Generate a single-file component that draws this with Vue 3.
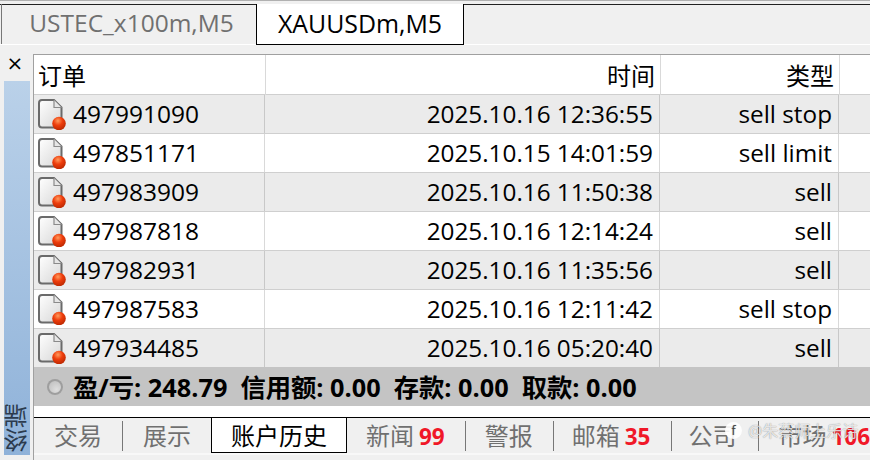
<script setup>
const orders = [
  { id: "497991090", time: "2025.10.16 12:36:55", type: "sell stop" },
  { id: "497851171", time: "2025.10.15 14:01:59", type: "sell limit" },
  { id: "497983909", time: "2025.10.16 11:50:38", type: "sell" },
  { id: "497987818", time: "2025.10.16 12:14:24", type: "sell" },
  { id: "497982931", time: "2025.10.16 11:35:56", type: "sell" },
  { id: "497987583", time: "2025.10.16 12:11:42", type: "sell stop" },
  { id: "497934485", time: "2025.10.16 05:20:40", type: "sell" },
];

const tabs = [
  { label: "交易" },
  { label: "展示" },
  { label: "账户历史", active: true },
  { label: "新闻", count: 99 },
  { label: "警报" },
  { label: "邮箱", count: 35 },
  { label: "公司" },
  { label: "市场", count: 106 },
];
</script>

<template>
  <div class="app">
    <div class="chart-tabs">
      <div class="chart-tab">USTEC_x100m,M5</div>
      <div class="chart-tab chart-tab-active">XAUUSDm,M5</div>
    </div>

    <div class="terminal">
      <div class="side">
        <span class="close">×</span>
        <div class="side-title"><span>终端</span></div>
      </div>

      <div class="main">
        <div class="row-head">
          <div class="cell">订单</div>
          <div class="cell right">时间</div>
          <div class="cell right">类型</div>
          <div class="cell"></div>
        </div>
        <div v-for="o in orders" :key="o.id" class="row">
          <div class="cell cell-id">
            <svg class="doc" width="29" height="31" viewBox="0 0 29 31">
              <defs>
                <linearGradient id="paper" x1="0" y1="0" x2="1" y2="1">
                  <stop offset="0" stop-color="#ffffff" />
                  <stop offset="1" stop-color="#d6d6d6" />
                </linearGradient>
                <radialGradient id="dot" cx="0.42" cy="0.3" r="0.75">
                  <stop offset="0" stop-color="#ff9a5c" />
                  <stop offset="0.45" stop-color="#ee3d0c" />
                  <stop offset="1" stop-color="#b52600" />
                </radialGradient>
              </defs>
              <path d="M2 4 a3 3 0 0 1 3-3 H17 L24.5 8.5 V26 a2.5 2.5 0 0 1-2.5 2.5 H5 a3 3 0 0 1-3-3 Z" fill="url(#paper)" stroke="#6a6a6a" stroke-width="2" />
              <path d="M17 1 V8.5 H24.5" fill="#e6e6e6" stroke="#8a8a8a" stroke-width="1.2" />
              <circle cx="22" cy="24.5" r="6.8" fill="url(#dot)" />
            </svg>
            <span>{{ o.id }}</span>
          </div>
          <div class="cell right">{{ o.time }}</div>
          <div class="cell right">{{ o.type }}</div>
          <div class="cell"></div>
        </div>

        <div class="status">
          <span class="led"></span>
          <b>盈/亏: 248.79</b>
          <b>信用额: 0.00</b>
          <b>存款: 0.00</b>
          <b>取款: 0.00</b>
        </div>

        <div class="gap"></div>

        <div class="bottom-tabs">
          <div
            v-for="t in tabs"
            :key="t.label"
            :class="['bottom-tab', { 'bottom-tab-active': t.active }]"
          >
            {{ t.label }}<b v-if="t.count" class="count">{{ t.count }}</b>
          </div>
        </div>
      </div>
    </div>

    <div class="watermark">
      <span class="wm-icon">f</span>
      <span>@朱蔡师上乐诗</span>
    </div>
  </div>
</template>

<style scoped>
.app {
  position: relative;
  width: 870px;
  height: 460px;
  overflow: hidden;
  background: #f0f0f0;
  font-family: "Open Sans", "Noto Sans CJK SC", sans-serif;
  color: #000;
}

.chart-tabs {
  display: flex;
  height: 45px;
  padding-left: 1px;
  box-sizing: border-box;
  border-top: 1px solid #b0b0b0;
  box-shadow: inset 0 3px 0 #f0f0f0, inset 0 4px 0 #222;
  border-bottom: 1px solid #fff;
}

.chart-tab {
  width: 255px;
  margin-top: 3px;
  padding-left: 5px;
  box-sizing: border-box;
  border-left: 1px solid #777;
  font-size: 24.5px;
  line-height: 38px;
  text-align: center;
  color: #707070;
}

.chart-tab-active {
  width: 208px;
  height: 41px;
  padding-left: 0;
  border: 1px solid #000;
  border-top: none;
  background: #fff;
  color: #000;
  font-size: 24.9px;
}

.terminal {
  display: flex;
  height: 415px;
  padding: 9px 0 0 4px;
  box-sizing: border-box;
}

.side {
  display: flex;
  flex-direction: column;
  width: 28px;
  margin-right: 1px;
}

.close {
  width: 22px;
  height: 27px;
  margin-top: -1px;
  margin-bottom: 1px;
  text-align: center;
  font: 20px/20px "DejaVu Sans", sans-serif;
}

.side-title {
  display: flex;
  align-items: flex-end;
  justify-content: center;
  width: 26px;
  flex: 1;
  margin-bottom: 5px;
  background: linear-gradient(#bad1e9, #8fb2d9);
}

.side-title span {
  writing-mode: vertical-rl;
  transform: rotate(180deg);
  font-size: 24px;
  line-height: 26px;
  color: #2c3b4e;
  padding-top: 3px;
}

.main {
  flex: 1;
  min-width: 0;
  border-top: 1px solid #a0a0a0;
  border-left: 1px solid #a0a0a0;
  display: flex;
  flex-direction: column;
}

.row,
.row-head {
  display: grid;
  flex: none;
  box-sizing: border-box;
  border-bottom: 1px solid #cfcfcf;
  font-size: 24.3px;
  background: #fff;
}

.row {
  grid-template-columns: 231px 395px 179px 1fr;
  height: 39px;
  line-height: 38px;
}

.row-head {
  grid-template-columns: 232px 395px 179px 1fr;
  height: 40px;
  line-height: 42px;
  font-size: 24px;
}

.row:nth-child(even) {
  background: #ebebeb;
}

.row:nth-child(8) {
  height: 38px;
  border-bottom: none;
}

.cell {
  padding: 0 6px 0 7px;
  border-right: 1px solid #d9d9d9;
  white-space: nowrap;
}

.row-head .cell {
  padding: 0 5px 0 4px;
}

.cell:last-child {
  border-right: none;
}

.row:nth-child(even) .cell {
  border-right-color: #c8c8c8;
}

.right {
  text-align: right;
}

.cell-id {
  display: flex;
  align-items: center;
  padding: 0 0 0 3px;
  gap: 7px;
  font-size: 24.5px;
}

.doc {
  flex: none;
}

.status {
  display: flex;
  align-items: center;
  gap: 13px;
  height: 39px;
  flex: none;
  padding-left: 13px;
  padding-bottom: 2px;
  box-sizing: border-box;
  background: #c4c4c4;
  font-size: 25.3px;
}

.led {
  width: 16px;
  height: 16px;
  margin-right: -3px;
  margin-top: 2px;
  border-radius: 50%;
  box-shadow: inset 0 0 0 2px #9e9e9e;
  background: radial-gradient(circle at 60% 65%, #dedede, #b4b4b4);
}

.gap {
  height: 11px;
  flex: none;
  background: #fff;
}

.bottom-tabs {
  display: flex;
  height: 38px;
  flex: none;
  box-sizing: border-box;
  border-top: 1px solid #000;
  border-bottom: 2px solid #f8f8f8;
  padding-top: 3px;
  white-space: nowrap;
}

.bottom-tab {
  height: 30px;
  padding: 0 20px;
  border-right: 1px solid #777;
  font-size: 24px;
  line-height: 29px;
  color: #707070;
}

.bottom-tab:nth-child(5) {
  padding-left: 19px;
}

.bottom-tab:nth-child(6) {
  padding: 0 21px 0 18px;
}

.bottom-tab:nth-child(7) {
  padding: 0 22px 0 16px;
}

.bottom-tab:nth-child(8) {
  padding-left: 19px;
}

.bottom-tab-active {
  height: 36px;
  box-sizing: border-box;
  margin: -4px -1px 0 -1px;
  padding: 0 19px;
  line-height: 36px;
  background: #fff;
  color: #000;
  border: 1px solid #000;
}

.count {
  margin-left: 5px;
  color: #f01828;
  font-size: 22.5px;
}

.watermark {
  position: absolute;
  left: 725px;
  top: 418px;
  display: flex;
  align-items: center;
  gap: 6px;
  font-size: 16px;
  color: rgba(255, 255, 255, 0.8);
  text-shadow: 0 0 1px rgba(0, 0, 0, 0.5);
}

.wm-icon {
  width: 17px;
  height: 17px;
  border-radius: 50%;
  background: rgba(255, 255, 255, 0.9);
  color: #444;
  font-size: 12px;
  line-height: 17px;
  text-align: center;
}
</style>
<style>
html, body {
  margin: 0;
}
</style>
